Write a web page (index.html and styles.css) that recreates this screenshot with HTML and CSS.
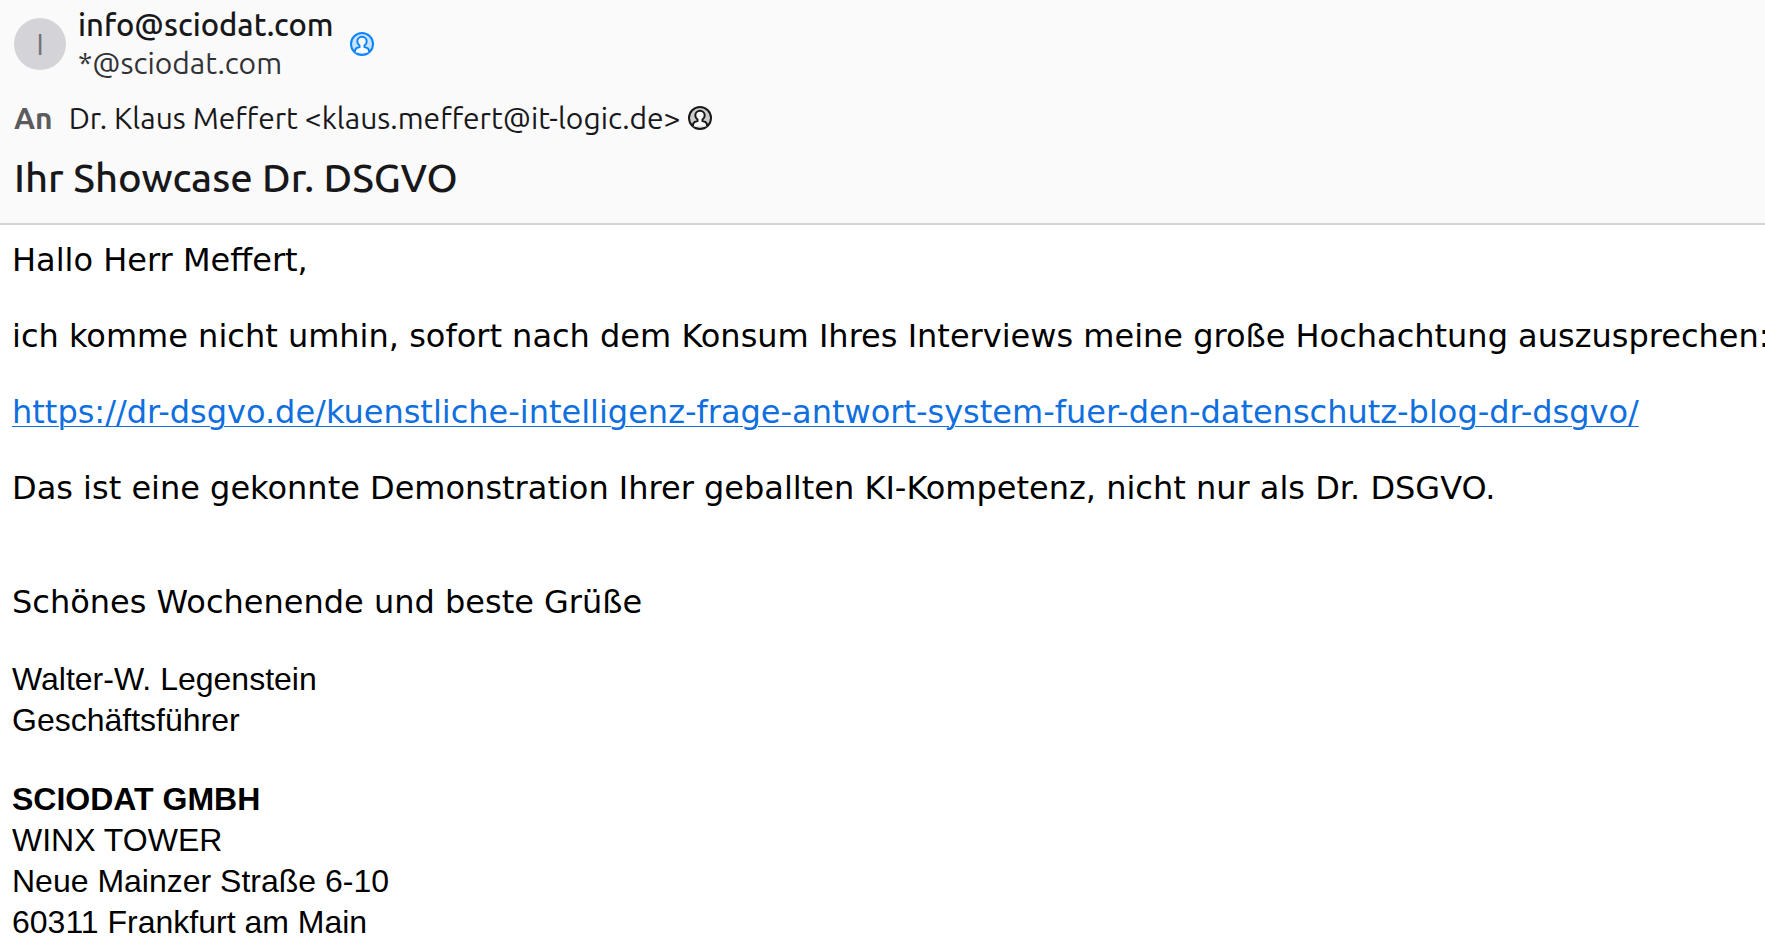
FILE: index.html
```html
<!DOCTYPE html>
<html lang="de">
<head>
    <meta charset="UTF-8">
    <meta name="viewport" content="width=device-width, initial-scale=1.0">
    <title>Ihr Showcase Dr. DSGVO</title>
    <link rel="stylesheet" href="styles.css">
</head>
<body>

    <!-- Message header -->
    <header class="message-header">
        <div class="sender">
            <div class="avatar">I</div>
            <div class="sender-text">
                <div class="sender-name">info@sciodat.com</div>
                <div class="sender-address">*@sciodat.com</div>
            </div>
            <button class="contact-btn contact-known" type="button" aria-label="Kontakt bearbeiten">
                <svg viewBox="0 0 24 24" width="24" height="24">
                    <circle class="icon-ring" cx="12" cy="12" r="11"/>
                    <path class="icon-person" d="M5 20.500V19c0-2.200 1.500-3.500 4.500-4v-1.500C8.200 12.500 7.300 11.200 7.300 9.500a4.700 4.700 0 0 1 9.400 0c0 1.700-.9 3-2.200 4V15c3 .5 4.500 1.800 4.500 4v1.500"/>
                </svg>
            </button>
        </div>

        <div class="recipients">
            <span class="recipients-label">An</span>
            <span class="recipient">Dr. Klaus Meffert &lt;klaus.meffert@it-logic.de&gt;</span>
            <button class="contact-btn" type="button" aria-label="Zum Adressbuch hinzufügen">
                <svg viewBox="0 0 24 24" width="24" height="24">
                    <circle class="icon-ring" cx="12" cy="12" r="11"/>
                    <path class="icon-person" d="M5 20.500V19c0-2.200 1.500-3.500 4.500-4v-1.500C8.200 12.500 7.300 11.200 7.300 9.500a4.700 4.700 0 0 1 9.400 0c0 1.700-.9 3-2.200 4V15c3 .5 4.500 1.800 4.500 4v1.500"/>
                </svg>
            </button>
        </div>

        <h1 class="subject">Ihr Showcase Dr. DSGVO</h1>
    </header>

    <!-- Message text -->
    <main class="message-body">
        <p>Hallo Herr Meffert,</p>
        <p>ich komme nicht umhin, sofort nach dem Konsum Ihres Interviews meine große Hochachtung auszusprechen:</p>
        <p><a href="https://dr-dsgvo.de/kuenstliche-intelligenz-frage-antwort-system-fuer-den-datenschutz-blog-dr-dsgvo/">https://dr-dsgvo.de/kuenstliche-intelligenz-frage-antwort-system-fuer-den-datenschutz-blog-dr-dsgvo/</a></p>
        <p>Das ist eine gekonnte Demonstration Ihrer geballten KI-Kompetenz, nicht nur als Dr. DSGVO.</p>
        <br>
        <p>Schönes Wochenende und beste Grüße</p>

        <div class="signature">
            <p>Walter-W. Legenstein<br>
            Geschäftsführer</p>
            <p><b>SCIODAT GMBH</b><br>
            WINX TOWER<br>
            Neue Mainzer Straße 6-10<br>
            60311 Frankfurt am Main</p>
        </div>
    </main>

</body>
</html>
```

FILE: styles.css
```css
/* General Styling */
body {
    margin: 0;
    background-color: #ffffff;
    color: #000000;
    overflow-x: hidden;
}

/* Message Header */
.message-header {
    display: flex;
    flex-direction: column;
    padding: 6px 14px 20px;
    background-color: #fafafa;
    border-bottom: 2px solid #d4d4d8;
    color: #18181b;
    font-family: Ubuntu, "Noto Sans", sans-serif;
    font-size: 30px;
}

.sender {
    display: flex;
    align-items: center;
}

.avatar {
    display: flex;
    align-items: center;
    justify-content: center;
    width: 52px;
    height: 52px;
    border-radius: 50%;
    background-color: #d4d4d8;
    color: #71717a;
}

.sender-text {
    margin: 0 16px 0 12px;
    line-height: 38px;
}

.sender-name {
    font-size: 31px;
    font-weight: 500;
}

.sender-address {
    color: #323236;
}

/* Contact Icons */
.contact-btn {
    display: flex;
    padding: 0;
    border: none;
    background: none;
    color: #18181b;
    cursor: pointer;
}

.contact-known {
    color: #0a84ff;
}

.icon-ring,
.icon-person {
    stroke: currentColor;
    stroke-width: 2;
}

.icon-ring {
    fill: currentColor;
    fill-opacity: 0.2;
}

.icon-person {
    fill: #fafafa;
}

.recipients {
    display: flex;
    align-items: center;
    margin-top: 16px;
    line-height: 40px;
}

.recipients-label {
    margin-right: 16px;
    color: #5b5b5e;
    font-weight: 700;
}

.recipient {
    margin-right: 7px;
}

.subject {
    margin: 15px 0 0;
    font-size: 40px;
    font-weight: 500;
    line-height: 50px;
}

/* Message Body */
.message-body {
    padding: 16px 12px 0;
    font-family: "DejaVu Sans", sans-serif;
    font-size: 32px;
    line-height: 38px;
    white-space: nowrap;
}

.message-body p {
    margin: 0 0 38px;
}

.message-body a {
    color: #0f6fde;
    text-decoration-thickness: 1px;
    text-underline-offset: 3px;
}

.signature {
    font-family: "Nimbus Sans", "Liberation Sans", Arial, sans-serif;
    line-height: 41px;
}

.signature p:last-child {
    margin-bottom: 0;
}
```
